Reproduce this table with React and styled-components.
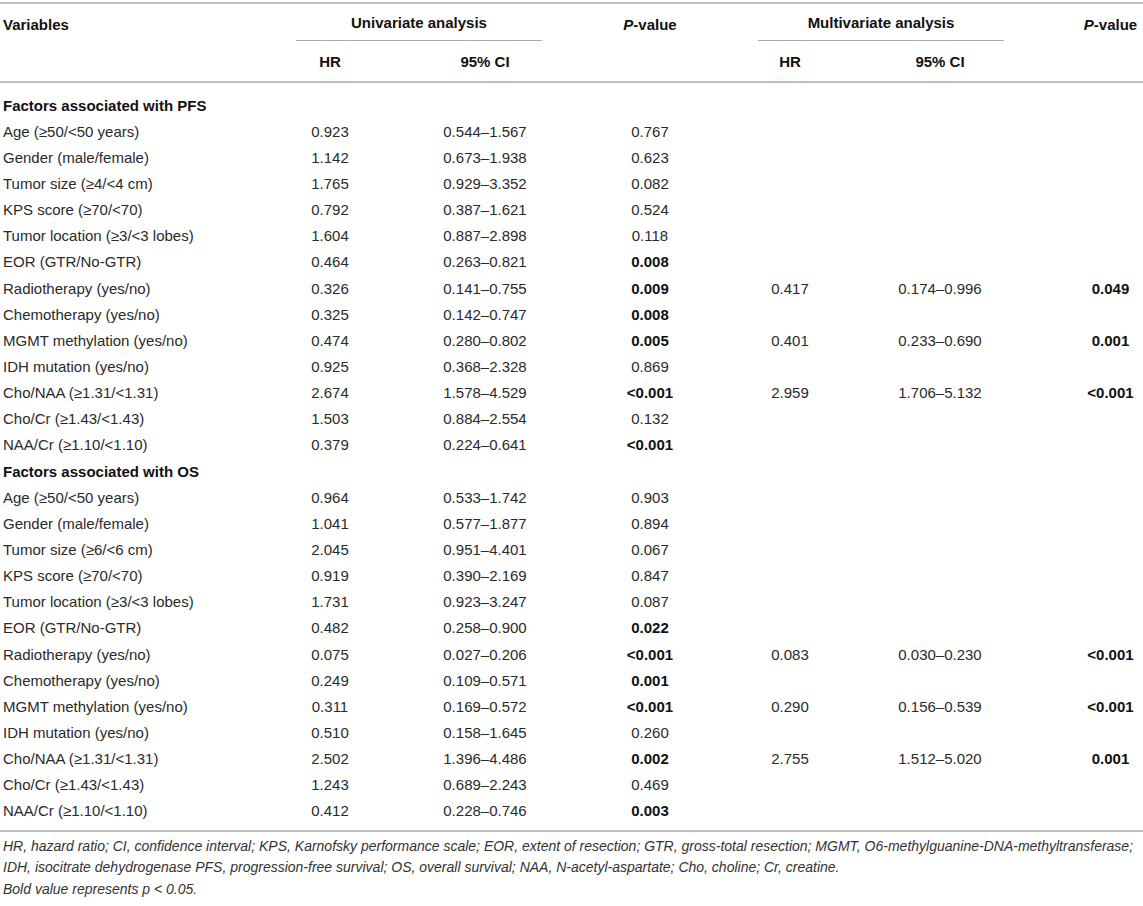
import React from "react";
import styled, { createGlobalStyle } from "styled-components";

const GlobalStyle = createGlobalStyle`
  body {
    margin: 0;
    background: #ffffff;
    font-family: "Liberation Sans", Arial, Helvetica, sans-serif;
    color: #2a2a2a;
  }
`;

// column tracks shared by the header and every body row
const COLS = "268px 124px 186px 144px 136px 164px 121px";

const Page = styled.div`
  width: 1143px;
  padding-top: 2px;
`;

const Rule = styled.div`
  height: 2px;
  background: #bdbdbd;
`;

const Head = styled.div`
  display: grid;
  grid-template-columns: ${COLS};
  grid-template-rows: 37px 40px;
  font-size: 15px;
  font-weight: bold;
  color: #111;
`;

const HeadCell = styled.div`
  grid-column: ${(p) => p.$col};
  grid-row: ${(p) => p.$row};
  display: flex;
  align-items: ${(p) => (p.$top ? "flex-start" : "center")};
  justify-content: ${(p) => (p.$left ? "flex-start" : "center")};
  padding-top: ${(p) => (p.$top ? "12px" : "0")};
  padding-left: ${(p) => p.$pl || 0}px;
`;

const Group = styled.div`
  grid-column: ${(p) => p.$col};
  grid-row: 1;
  margin: 0 ${(p) => p.$mr}px 0 ${(p) => p.$ml}px;
  border-bottom: 1px solid #aaaaaa;
  display: flex;
  align-items: center;
  justify-content: center;
`;

const Italic = styled.i`
  font-style: italic;
`;

const Body = styled.div`
  padding: 9px 0 6px;
`;

const Row = styled.div`
  display: grid;
  grid-template-columns: ${COLS};
  height: 26.15px;
  align-items: center;
  font-size: 15px;
`;

const Section = styled.div`
  grid-column: 1 / -1;
  padding-left: 3px;
  font-weight: bold;
  color: #111;
`;

const Label = styled.div`
  padding-left: 3px;
  white-space: nowrap;
`;

const Num = styled.div`
  display: flex;
  justify-content: center;
  white-space: nowrap;
  padding-left: ${(p) => p.$pl || 0}px;
  font-weight: ${(p) => (p.$bold ? "bold" : "normal")};
  color: ${(p) => (p.$bold ? "#111" : "inherit")};
`;

const Notes = styled.div`
  padding: 4px 0 0 3px;
  font-size: 14px;
  font-style: italic;
  line-height: 21.5px;
  color: #333;
`;

const NoteLine = styled.div`
  white-space: nowrap;
`;

const pfs = [
  ["Age (≥50/<50 years)", "0.923", "0.544–1.567", "0.767"],
  ["Gender (male/female)", "1.142", "0.673–1.938", "0.623"],
  ["Tumor size (≥4/<4 cm)", "1.765", "0.929–3.352", "0.082"],
  ["KPS score (≥70/<70)", "0.792", "0.387–1.621", "0.524"],
  ["Tumor location (≥3/<3 lobes)", "1.604", "0.887–2.898", "0.118"],
  ["EOR (GTR/No-GTR)", "0.464", "0.263–0.821", "0.008"],
  ["Radiotherapy (yes/no)", "0.326", "0.141–0.755", "0.009", "0.417", "0.174–0.996", "0.049"],
  ["Chemotherapy (yes/no)", "0.325", "0.142–0.747", "0.008"],
  ["MGMT methylation (yes/no)", "0.474", "0.280–0.802", "0.005", "0.401", "0.233–0.690", "0.001"],
  ["IDH mutation (yes/no)", "0.925", "0.368–2.328", "0.869"],
  ["Cho/NAA (≥1.31/<1.31)", "2.674", "1.578–4.529", "<0.001", "2.959", "1.706–5.132", "<0.001"],
  ["Cho/Cr (≥1.43/<1.43)", "1.503", "0.884–2.554", "0.132"],
  ["NAA/Cr (≥1.10/<1.10)", "0.379", "0.224–0.641", "<0.001"],
];

const os = [
  ["Age (≥50/<50 years)", "0.964", "0.533–1.742", "0.903"],
  ["Gender (male/female)", "1.041", "0.577–1.877", "0.894"],
  ["Tumor size (≥6/<6 cm)", "2.045", "0.951–4.401", "0.067"],
  ["KPS score (≥70/<70)", "0.919", "0.390–2.169", "0.847"],
  ["Tumor location (≥3/<3 lobes)", "1.731", "0.923–3.247", "0.087"],
  ["EOR (GTR/No-GTR)", "0.482", "0.258–0.900", "0.022"],
  ["Radiotherapy (yes/no)", "0.075", "0.027–0.206", "<0.001", "0.083", "0.030–0.230", "<0.001"],
  ["Chemotherapy (yes/no)", "0.249", "0.109–0.571", "0.001"],
  ["MGMT methylation (yes/no)", "0.311", "0.169–0.572", "<0.001", "0.290", "0.156–0.539", "<0.001"],
  ["IDH mutation (yes/no)", "0.510", "0.158–1.645", "0.260"],
  ["Cho/NAA (≥1.31/<1.31)", "2.502", "1.396–4.486", "0.002", "2.755", "1.512–5.020", "0.001"],
  ["Cho/Cr (≥1.43/<1.43)", "1.243", "0.689–2.243", "0.469"],
  ["NAA/Cr (≥1.10/<1.10)", "0.412", "0.228–0.746", "0.003"],
];

// bold value represents p < 0.05
const isBold = (p) => !!p && (p.startsWith("<") || parseFloat(p) < 0.05);

const DataRow = ({ r }) => (
  <Row>
    <Label>{r[0]}</Label>
    <Num>{r[1]}</Num>
    <Num>{r[2]}</Num>
    <Num $bold={isBold(r[3])}>{r[3]}</Num>
    <Num>{r[4]}</Num>
    <Num>{r[5]}</Num>
    <Num $pl={56} $bold={isBold(r[6])}>{r[6]}</Num>
  </Row>
);

const App = () => {
  return (
    <Page>
      <GlobalStyle />
      <Rule />
      <Head>
        <HeadCell $col={1} $row="1 / 3" $top $left $pl={3}>
          Variables
        </HeadCell>
        <Group $col="2 / 4" $ml={28} $mr={36}>
          Univariate analysis
        </Group>
        <HeadCell $col={4} $row="1 / 3" $top>
          <span>
            <Italic>P</Italic>-value
          </span>
        </HeadCell>
        <Group $col="5 / 7" $ml={36} $mr={18}>
          Multivariate analysis
        </Group>
        <HeadCell $col={7} $row="1 / 3" $top $pl={56}>
          <span>
            <Italic>P</Italic>-value
          </span>
        </HeadCell>
        <HeadCell $col={2} $row={2}>HR</HeadCell>
        <HeadCell $col={3} $row={2}>95% CI</HeadCell>
        <HeadCell $col={5} $row={2}>HR</HeadCell>
        <HeadCell $col={6} $row={2}>95% CI</HeadCell>
      </Head>
      <Rule />
      <Body>
        <Row>
          <Section>Factors associated with PFS</Section>
        </Row>
        {pfs.map((r, i) => (
          <DataRow key={"p" + i} r={r} />
        ))}
        <Row>
          <Section>Factors associated with OS</Section>
        </Row>
        {os.map((r, i) => (
          <DataRow key={"o" + i} r={r} />
        ))}
      </Body>
      <Rule />
      <Notes>
        <NoteLine>
          HR, hazard ratio; CI, confidence interval; KPS, Karnofsky performance scale; EOR, extent of
          resection; GTR, gross-total resection; MGMT, O6-methylguanine-DNA-methyltransferase;
        </NoteLine>
        <NoteLine>
          IDH, isocitrate dehydrogenase PFS, progression-free survival; OS, overall survival; NAA,
          N-acetyl-aspartate; Cho, choline; Cr, creatine.
        </NoteLine>
        <NoteLine>Bold value represents p &lt; 0.05.</NoteLine>
      </Notes>
    </Page>
  );
};

export default App;
